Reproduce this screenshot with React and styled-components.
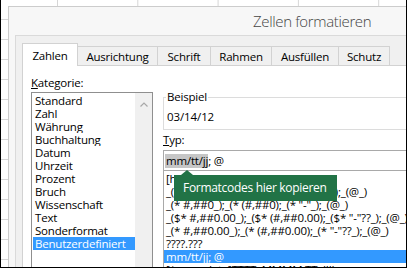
import React from "react";
import styled, { createGlobalStyle } from "styled-components";

const Global = createGlobalStyle`
  html, body { margin: 0; padding: 0; background: #ffffff; }
  body { width: 409px; height: 269px; overflow: hidden; }
  * { box-sizing: border-box; }
`;

const FONT = `"Open Sans", "Noto Sans", "Liberation Sans", sans-serif`;

const Frame = styled.div`
  width: 407px;
  height: 268px;
  border-left: 1px solid #000;
  border-right: 1px solid #000;
  border-bottom: 1px solid #000;
  overflow: hidden;
  padding: 6px 0 0 7px;
  background-color: #ffffff;
  background-image: linear-gradient(to right, #d6d6d6 1px, transparent 1px),
    linear-gradient(to bottom, #d6d6d6 1px, transparent 1px);
  background-size: 80.3px 100%, 100% 20px;
  background-position: 56px 0, 0 19px;
  font-family: ${FONT};
  color: #000;
`;

const Dialog = styled.div`
  width: 440px;
  height: 300px;
  border: 1px solid #cccccc;
  background: #f7f7f7;
  display: flex;
  flex-direction: column;
`;

const TitleBar = styled.div`
  height: 28px;
  line-height: 28px;
  padding-left: 244px;
  font-size: 15px;
  font-weight: 300;
  letter-spacing: -0.35px;
  color: #444444;
  white-space: nowrap;
`;

const Inner = styled.div`
  margin-left: 6px;
  flex: 1;
  border: 1px solid #dadada;
  background: #f0f0f0;
  padding: 7px 0 0 6px;
  display: flex;
  flex-direction: column;
`;

const TabRow = styled.div`
  display: flex;
  align-items: flex-end;
  height: 22px;
  position: relative;
  z-index: 1;
`;

const Tab = styled.div`
  width: ${(p) => p.$w}px;
  height: ${(p) => (p.$active ? 23 : 19)}px;
  margin-bottom: ${(p) => (p.$active ? -1 : 0)}px;
  margin-left: ${(p) => (p.$first ? 0 : -1)}px;
  border: 1px solid #d2d2d2;
  border-bottom: none;
  background: ${(p) => (p.$active ? "#ffffff" : "#f0f0f0")};
  display: flex;
  justify-content: center;
  align-items: center;
  padding-top: ${(p) => (p.$active ? 0 : 1)}px;
  font-size: 11.5px;
  letter-spacing: -0.2px;
  color: #000;
  white-space: nowrap;
  position: relative;
  z-index: ${(p) => (p.$active ? 2 : 1)};
`;

const Panel = styled.div`
  flex: 1;
  border: 1px solid #d2d2d2;
  background: #ffffff;
  padding: 10px 0 0 8px;
`;

const Body = styled.div`
  display: flex;
  gap: 10px;
  align-items: flex-start;
`;

const LeftCol = styled.div`
  width: 122px;
  display: flex;
  flex-direction: column;
`;

const Label = styled.div`
  font-size: 11.5px;
  letter-spacing: -0.2px;
  line-height: 14px;
  height: 14px;
  margin-bottom: ${(p) => p.$mb || 0}px;
  margin-top: ${(p) => p.$mt || 0}px;
  white-space: nowrap;
`;

const U = styled.span`
  text-decoration: underline;
  text-underline-offset: 1px;
`;

const ListBox = styled.div`
  margin-top: 1px;
  height: 190px;
  border: 1px solid #8f8f8f;
  display: flex;
`;

const Items = styled.div`
  flex: 1;
  padding: 1px 0 0 1px;
  display: flex;
  flex-direction: column;
`;

const Item = styled.div`
  flex-shrink: 0;
  height: 13px;
  line-height: 13px;
  font-size: 11.5px;
  letter-spacing: -0.2px;
  padding-left: ${(p) => p.$pl || 2}px;
  white-space: nowrap;
  overflow: hidden;
  background: ${(p) => (p.$sel ? "#3399ff" : "transparent")};
  color: ${(p) => (p.$sel ? "#ffffff" : "#000000")};
`;

const ScrollBar = styled.div`
  width: 17px;
  background: #f0f0f0;
  display: flex;
  justify-content: center;
  padding-top: 9px;
`;

const RightCol = styled.div`
  width: 260px;
  margin-top: 14px;
  display: flex;
  flex-direction: column;
  position: relative;
`;

const Group = styled.fieldset`
  margin: 0;
  min-width: 0;
  border: 1px solid #dcdcdc;
  padding: 6px 3px 5px 3px;
`;

const Legend = styled.legend`
  margin-left: -1px;
  padding: 0 1px;
  font-size: 11.5px;
  letter-spacing: -0.2px;
  line-height: 14px;
`;

const Sample = styled.div`
  font-size: 11.5px;
  line-height: 14px;
  letter-spacing: -0.1px;
`;

const Input = styled.div`
  margin-top: 3px;
  height: 21px;
  border: 1px solid #a9a9a9;
  padding-left: 1px;
  display: flex;
  align-items: center;
  font-size: 11.5px;
  letter-spacing: -0.2px;
  white-space: nowrap;
`;

const Selected = styled.span`
  background: #c6c6c6;
  line-height: 14px;
  padding-left: 1px;
`;

const CodeList = styled.div`
  margin-top: -1px;
  height: 120px;
  border: 1px solid #a9a9a9;
  padding-top: 1px;
  display: flex;
  flex-direction: column;
`;

const Tooltip = styled.div`
  position: absolute;
  left: 11px;
  top: 85px;
  width: 163px;
  height: 26px;
  background: #217346;
  color: #ffffff;
  font-size: 12px;
  letter-spacing: -0.3px;
  line-height: 26px;
  padding-left: 9px;
  white-space: nowrap;
  z-index: 3;
  &::before {
    content: "";
    position: absolute;
    left: 7px;
    top: -5px;
    border-left: 6px solid transparent;
    border-right: 6px solid transparent;
    border-bottom: 5px solid #217346;
  }
`;

const categories = [
  "Standard",
  "Zahl",
  "Währung",
  "Buchhaltung",
  "Datum",
  "Uhrzeit",
  "Prozent",
  "Bruch",
  "Wissenschaft",
  "Text",
  "Sonderformat",
  "Benutzerdefiniert",
];

const codes = [
  "[h]:mm:ss",
  '_($* #,##0_);_($* (#,##0);_($* "-"_);_(@_)',
  '_(* #,##0_);_(* (#,##0);_(* "-"_);_(@_)',
  '_($* #,##0.00_);_($* (#,##0.00);_($* "-"??_);_(@_)',
  '_(* #,##0.00_);_(* (#,##0.00);_(* "-"??_);_(@_)',
  "????.???",
  "mm/tt/jj; @",
  "[$-x-sysdate]TTTT, MMMM TT, JJJJ",
];

const tabs = [
  { t: "Zahlen", w: 56 },
  { t: "Ausrichtung", w: 81 },
  { t: "Schrift", w: 54 },
  { t: "Rahmen", w: 62 },
  { t: "Ausfüllen", w: 68 },
  { t: "Schutz", w: 52 },
];

export default function App() {
  return (
    <>
      <Global />
      <Frame>
        <Dialog>
          <TitleBar>Zellen formatieren</TitleBar>
          <Inner>
            <TabRow>
              {tabs.map((tb, i) => (
                <Tab key={tb.t} $w={tb.w} $active={i === 0} $first={i === 0}>
                  {tb.t}
                </Tab>
              ))}
            </TabRow>
            <Panel>
              <Body>
                <LeftCol>
                  <Label $mb={1}>
                    <U>K</U>ategorie:
                  </Label>
                  <ListBox>
                    <Items>
                      {categories.map((c) => (
                        <Item key={c} $sel={c === "Benutzerdefiniert"}>
                          {c}
                        </Item>
                      ))}
                    </Items>
                    <ScrollBar>
                      <svg width="8" height="5" viewBox="0 0 8 5">
                        <path d="M0.5 4.5 L4 1 L7.5 4.5" fill="none" stroke="#a8a8a8" strokeWidth="1.2" />
                      </svg>
                    </ScrollBar>
                  </ListBox>
                </LeftCol>
                <RightCol>
                  <Group>
                    <Legend>Beispiel</Legend>
                    <Sample>03/14/12</Sample>
                  </Group>
                  <Label $mt={3}>
                    <U>T</U>yp:
                  </Label>
                  <Input>
                    <Selected>mm/tt/jj</Selected>; @
                  </Input>
                  <CodeList>
                    {codes.map((c) => (
                      <Item key={c} $sel={c === "mm/tt/jj; @"} $pl={2}>
                        {c}
                      </Item>
                    ))}
                  </CodeList>
                  <Tooltip>Formatcodes hier kopieren</Tooltip>
                </RightCol>
              </Body>
            </Panel>
          </Inner>
        </Dialog>
      </Frame>
    </>
  );
}
